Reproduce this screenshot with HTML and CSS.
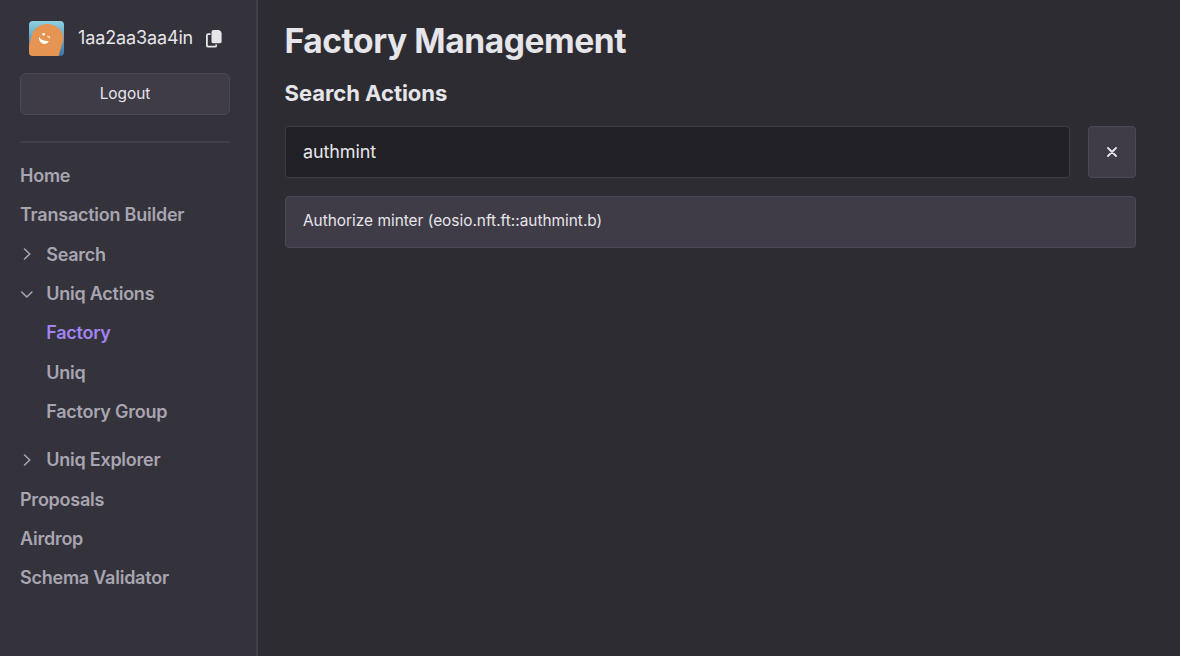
FILE: index.html
```html
<!DOCTYPE html>
<html lang="en">
<head>
<meta charset="utf-8">
<title>Factory Management</title>
<link rel="stylesheet" href="styles.css">
</head>
<body>
<div class="layout">
  <aside class="sidebar">
    <div class="account">
      <svg class="avatar" viewBox="0 0 35 35">
        <defs><linearGradient id="sky" x1="0" y1="0" x2="0" y2="1"><stop offset="0" stop-color="#8fd0e2"/><stop offset="1" stop-color="#3b74a4"/></linearGradient></defs>
        <rect width="35" height="35" fill="url(#sky)"/>
        <path d="M0 35V24L3 14C5 7 11 3 18 3C28 3 36 11 34 20L29.500 35Z" fill="#e59452"/>
        <path d="M10 15.800C12 19.200 15 20.200 19.800 20C18.500 23 15.500 23.800 13 22.200C10.500 20.800 9.600 18.300 10 15.800Z" fill="#fff"/>
        <circle cx="14.600" cy="13.300" r="1.300" fill="#fff"/>
        <path d="M18.400 15.600Q20.300 15.200 20.800 17.200" fill="none" stroke="#fff" stroke-width="1.100"/>
      </svg>
      <span class="account-name">1aa2aa3aa4in</span>
      <svg class="copy" viewBox="0 0 16 18">
        <path d="M4.600 4.200H2.200Q.900 4.200.900 5.500V15.400Q.900 16.700 2.200 16.700H8.800Q10.200 16.700 10.200 15.400V14.500" fill="none" stroke="#e6e5ea" stroke-width="1.800"/>
        <path d="M7.500 0H13Q15.600 1.200 15.600 3.300V11.400Q15.600 13.300 13.600 13.300H7.500Q5.500 13.300 5.500 11.400V2Q5.500 0 7.500 0Z" fill="#e6e5ea"/>
      </svg>
    </div>
    <button class="logout">Logout</button>
    <hr class="divider">
    <nav class="nav">
      <a class="item">Home</a>
      <a class="item">Transaction Builder</a>
      <a class="item"><svg class="chevron" viewBox="0 0 14 14"><path d="M4.500 2L9.800 7L4.500 12"/></svg>Search</a>
      <a class="item"><svg class="chevron" viewBox="0 0 14 14"><path d="M1.700 5L6.800 10L11.900 5"/></svg>Uniq Actions</a>
      <div class="subnav">
        <a class="item active">Factory</a>
        <a class="item">Uniq</a>
        <a class="item">Factory Group</a>
      </div>
      <a class="item"><svg class="chevron" viewBox="0 0 14 14"><path d="M4.500 2L9.800 7L4.500 12"/></svg>Uniq Explorer</a>
      <a class="item">Proposals</a>
      <a class="item">Airdrop</a>
      <a class="item">Schema Validator</a>
    </nav>
  </aside>
  <main class="main">
    <h1 class="title">Factory Management</h1>
    <h2 class="subtitle">Search Actions</h2>
    <div class="search">
      <input class="search-input" type="text" value="authmint">
      <button class="clear" aria-label="Clear"><svg class="clear-icon" viewBox="0 0 10 10"><path d="M1 1L9 9M9 1L1 9"/></svg></button>
    </div>
    <div class="result">Authorize minter (eosio.nft.ft::authmint.b)</div>
  </main>
</div>
</body>
</html>
```
FILE: styles.css
```css
* { box-sizing: border-box; }
body {
  margin: 0;
  background: #2d2c32;
  color: #e6e5ea;
  font-family: Inter, "Liberation Sans", sans-serif;
  font-size: 17.5px;
}
.layout { display: flex; height: 656px; overflow: hidden; }
.sidebar {
  width: 258px;
  flex: none;
  padding: 21px 26px 0 20px;
  background: #34323b;
  border-right: 2px solid #403e48;
}
.account { display: flex; align-items: center; height: 35px; padding-left: 9px; }
.avatar { width: 35px; height: 35px; border-radius: 4px; }
.account-name { width: 115px; margin-left: 14px; padding-bottom: 2px; font-size: 18px; letter-spacing: -.13px; white-space: nowrap; }
.copy { width: 16px; height: 18px; margin-left: 13px; }
.logout {
  display: block;
  width: 210px;
  height: 42px;
  margin: 17px 0 0;
  padding: 0 0 1px;
  border: 1px solid #4c4956;
  border-radius: 6px;
  background: #403c47;
  color: inherit;
  font: 400 15.4px Inter, "Liberation Sans", sans-serif;
}
.divider { width: 210px; height: 2px; margin: 26px 0 12.900px; border: 0; background: #403e48; }
.nav { font-size: 18px; font-weight: 600; letter-spacing: -.24px; color: #a8a5b1; }
.item { display: flex; align-items: center; height: 39.330px; white-space: nowrap; }
.chevron { width: 14px; height: 14px; margin-right: 12.200px; fill: none; stroke: #a8a5b1; stroke-width: 1.600; stroke-linecap: round; stroke-linejoin: round; }
.subnav { padding: 0 0 8.900px 26.200px; }
.active { color: #a184f2; }
.main { flex: 1; padding: 20px 44px 0 27px; }
.title { margin: 0 0 0 -.500px; font-size: 33.600px; line-height: 41px; font-weight: 700; letter-spacing: -.440px; }
.subtitle { margin: 18px 0 19px -.400px; font-size: 22px; line-height: 28px; font-weight: 700; letter-spacing: -.04px; }
.search { display: flex; gap: 18px; }
.search-input {
  flex: 1;
  min-width: 0;
  height: 52px;
  padding: 0 17px 2px;
  border: 1px solid #3e3c45;
  border-radius: 4px;
  background: #212025;
  color: inherit;
  font: 400 18px Inter, "Liberation Sans", sans-serif;
  letter-spacing: -.12px;
}
.clear {
  display: flex;
  align-items: center;
  justify-content: center;
  width: 48px;
  height: 52px;
  padding: 0 1px 0 0;
  border: 1px solid #4c4956;
  border-radius: 4px;
  background: #403c47;
}
.clear-icon { width: 10px; height: 10px; fill: none; stroke: #e6e5ea; stroke-width: 1.800; stroke-linecap: round; }
.result {
  height: 52px;
  margin-top: 18px;
  padding: 14px 17px;
  border: 1px solid #4c4956;
  border-radius: 4px;
  background: #403c47;
  font-size: 15.400px;
  line-height: 20px;
}
```
